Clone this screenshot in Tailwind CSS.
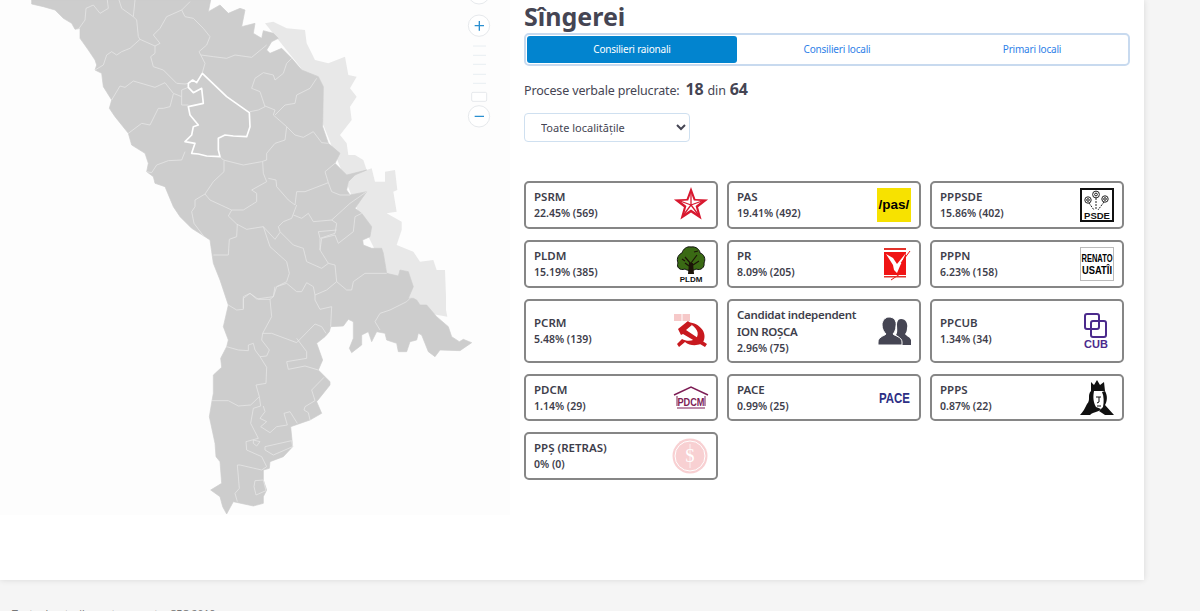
<!DOCTYPE html>
<html lang="en">
<head>
    <meta charset="UTF-8">
    <meta name="viewport" content="width=device-width, initial-scale=1.0">
    <title>Sîngerei</title>
    <script src="https://cdn.jsdelivr.net/npm/@tailwindcss/browser@4"></script>
</head>
<body class="bg-[#f5f5f5] h-[611px] overflow-hidden font-['Noto_Sans',sans-serif] text-[#454553]">
    <div class="w-[1144px] h-[580px] bg-white shadow-[0_0_6px_rgba(0,0,0,0.12)] flex">
        <!-- map -->
        <div class="w-[510px] h-[515px] bg-[#fdfdfd] shrink-0">
            <svg viewBox="0 0 1530 1545" width="510" height="515" class="block">
                <!-- transnistria -->
                <path fill="#e8e8e8" d="M795,70 L820,65 860,85 915,90 920,130 945,180 985,190 1035,170 1045,225 1070,230 1050,265 1070,290 1050,320 1055,360 1020,405 1040,430 1045,465 1065,465 1090,480 1100,510 1115,505 1125,545 1155,545 1155,515 1185,510 1192,570 1180,575 1190,635 1160,640 1205,665 1205,690 1190,735 1240,755 1260,785 1300,780 1310,810 1335,810 1338,890 1338,930 1342,950 1260,935 1200,900 1100,700 1000,450 900,200 Z"/>
                <!-- main outline -->
                <path fill="#cdcdcd" stroke="#cdcdcd" stroke-width="2" stroke-linejoin="round" d="M95,0 L95,12 130,20 165,30 190,55 215,70 225,88 240,85 240,115 265,150 285,180 290,195 285,210 305,220 310,260 335,300 328,325 345,350 385,400 395,435 435,460 445,490 440,515 460,530 465,550 495,560 520,620 540,650 575,685 615,710 630,720 640,790 660,840 680,900 685,915 670,980 685,1020 680,1040 662,1075 665,1102 640,1125 640,1180 636,1202 628,1250 645,1330 648,1370 660,1385 665,1450 632,1470 660,1490 668,1520 680,1542 700,1505 760,1518 790,1510 790,1490 800,1470 790,1440 790,1410 808,1405 810,1385 850,1370 878,1340 872,1280 930,1260 965,1240 950,1205 990,1155 990,1145 955,1110 968,1080 950,1030 975,1010 988,995 992,980 1030,978 1045,958 1060,965 1060,1015 1048,1045 1055,1058 1085,1035 1085,1005 1105,995 1115,1025 1130,995 1155,1000 1160,1020 1190,1030 1195,1055 1220,1055 1230,1025 1250,1020 1255,1000 1265,1005 1285,1055 1305,1070 1320,1050 1380,1052 1415,1028 1390,1018 1378,1025 1355,1010 1345,980 1310,950 1280,915 1260,915 1250,900 1240,895 1225,895 1240,860 1225,815 1200,810 1195,828 1160,820 1150,760 1145,745 1115,745 1090,735 1088,720 1110,710 1115,680 1085,640 1065,625 1100,575 1050,585 1040,570 1045,545 1065,525 1100,510 1040,525 1005,490 1020,460 985,430 968,380 970,260 955,230 905,210 875,175 845,145 810,160 800,150 815,125 835,115 820,100 790,92 785,115 760,100 765,70 725,80 735,30 720,25 685,40 660,15 625,35 632,0 Z"/>
                <!-- district borders -->
                <g fill="none" stroke="#e6e6e6" stroke-width="2.4" stroke-linejoin="round">
                    <path d="M322,0 L325,25 300,40 280,15 258,25 255,60 235,88"/>
                    <path d="M357,0 L365,25 400,50 410,60 415,110 420,118 390,145 365,155 350,165 335,155 320,165 310,195 285,210"/>
                    <path d="M405,0 L400,50"/>
                    <path d="M570,5 L545,30 500,50 480,85 460,105 480,130 465,138 420,118"/>
                    <path d="M545,30 L555,50 580,55 610,85 630,110 620,135 597,155 615,190 607,218"/>
                    <path d="M465,138 L465,160 452,170 460,200 490,210 530,250 555,252 565,250"/>
                    <path d="M603,165 L640,170 680,175 705,165 755,172 800,135"/>
                    <path d="M875,175 L860,190 850,220 825,240 820,225 790,218 765,235 755,265 780,275 795,320 775,330 750,335"/>
                    <path d="M795,318 L825,330 820,345 860,380 855,420 825,430 800,460 800,480 785,485 730,495 670,480 660,470"/>
                    <path d="M950,235 L930,265 890,285 885,310 855,315 825,345"/>
                    <path d="M860,380 L885,405 910,412 940,395 965,428 985,430"/>
                    <path d="M335,300 L360,258 375,262 400,243 465,262 495,248 520,280 545,290"/>
                    <path d="M520,282 L510,320 490,325 475,325 450,375 425,370 385,400"/>
                    <path d="M545,290 L545,270 565,262 M545,290 L545,315 565,315"/>
                    <path d="M555,455 L545,480 505,482 470,495 455,518 440,515"/>
                    <path d="M672,482 L672,515 640,545 615,582 585,600 585,620 575,635 582,670 612,710"/>
                    <path d="M615,582 L630,600 695,630 730,630 770,605 770,580 755,570 800,545 790,520 788,485"/>
                    <path d="M805,535 L828,540 830,560 865,600 885,615 890,575 915,575 985,548 975,515 1005,490"/>
                    <path d="M985,548 L995,575 1020,585 1050,585"/>
                    <path d="M890,615 L875,655 850,665 835,680 840,695 880,735 910,745 920,785 965,805 985,790 960,750 960,715 1005,700 1010,670 995,660 1050,610 1100,575"/>
                    <path d="M695,630 L685,648 710,672 740,688 790,680 825,718 840,697"/>
                    <path d="M712,672 L710,710 688,718 685,765 640,765"/>
                    <path d="M880,645 L905,655 925,640 940,665 995,660"/>
                    <path d="M1010,690 L955,695 960,715 M960,750 L965,715 1005,705 1015,730 1060,695 1065,650 1085,640"/>
                    <path d="M790,680 L810,740 860,785 868,820 860,845 830,860 820,890 770,897 750,880 730,890 730,925"/>
                    <path d="M985,790 L1005,795 1010,845 980,870 945,885 940,860 920,848 905,875 890,875 860,850 830,860"/>
                    <path d="M1010,845 L1040,870 1055,870 1060,845 1095,820 1160,820"/>
                    <g transform="translate(0,840)">
                        <path d="M685,75 L710,90 730,88 730,55 750,40 775,58 810,58 815,110 788,160 785,180 808,210 800,228 780,230 765,210 760,190 745,195 745,212 715,210 680,200"/>
                        <path d="M810,58 L820,50 825,20"/>
                        <path d="M945,45 L945,60 960,88 995,80 992,140"/>
                        <path d="M788,160 L815,160 890,188 945,132 965,140 978,160"/>
                        <path d="M890,175 L920,215 920,235 860,245 865,268 915,258 955,270"/>
                        <path d="M780,230 L800,262 798,310 768,315 778,350 752,375 715,378 685,362 636,362"/>
                        <path d="M778,350 L782,378 760,385 752,430 775,475 738,485 740,510 785,530 800,560 785,570 720,555 712,555 718,625 705,640 712,665"/>
                        <path d="M790,378 L795,395 780,415 800,425 782,440 810,458 830,440 862,435 852,400 870,395 892,430"/>
                        <path d="M930,420 L925,398 912,390 915,380 945,362 935,330 972,292"/>
                        <path d="M795,500 L875,482 878,500 820,525 795,510 Z"/>
                        <path d="M760,480 L780,485 770,498 760,490 Z"/>
                        <path d="M765,602 L790,600 798,632 768,645 762,620 Z"/>
                        <path d="M1125,125 L1140,100 1170,90 1220,65 1235,50 M1125,125 L1140,150"/>
                    </g>
                </g>
                <!-- selected district -->
                <path fill="none" stroke="#fff" stroke-width="5" stroke-linejoin="round" d="M607,220 L680,290 748,338 750,380 740,410 700,408 675,405 655,415 655,450 660,470 620,468 595,462 575,460 585,430 555,425 575,405 580,380 595,375 570,345 565,320 610,310 605,265 580,278 565,262 565,250 578,240 590,248 Z"/>
                <!-- zoom control -->
                <g fill="#fff" stroke="#e6e9ec" stroke-width="3">
                    <circle cx="1437" cy="-20" r="32"/>
                    <circle cx="1437" cy="77" r="32"/>
                    <circle cx="1437" cy="349" r="32"/>
                    <rect x="1415" y="277" width="45" height="27" rx="4"/>
                </g>
                <path fill="none" stroke="#e8eef2" stroke-width="3" d="M1419,138 H1458 M1419,166 H1458 M1419,193 H1458 M1419,223 H1458 M1419,250 H1458"/>
                <path fill="none" stroke="#2a8fd0" stroke-width="4" d="M1424,77 H1452 M1438,63 V92 M1424,349 H1452"/>
            </svg>
        </div>
        <!-- results -->
        <div class="pl-[14px] flex-1">
            <h1 class="text-[25px] font-bold leading-[33px] text-[#454553]">Sîngerei</h1>
            <div class="w-[606px] h-[33px] border-2 border-[#c8daef] rounded-[5px] flex p-px text-[10px] tracking-[-0.2px]">
                <div class="w-[210px] bg-[#0284cf] text-white rounded-[3px] flex items-center justify-center">Consilieri raionali</div>
                <div class="w-[200px] text-[#2f7fe8] flex items-center justify-center">Consilieri locali</div>
                <div class="flex-1 text-[#2f7fe8] flex items-center justify-center">Primari locali</div>
            </div>
            <p class="mt-[11px] text-[12.5px] tracking-[-0.15px] leading-[24px] h-[24px] flex items-baseline">
                <span>Procese verbale prelucrate:</span>
                <b class="ml-[6px] text-[16px]">18</b>
                <span class="ml-[4px]">din</span>
                <b class="ml-[4px] text-[16px]">64</b>
            </p>
            <select class="mt-[12px] block w-[166px] h-[29px] border border-[#cfe0f0] rounded-[4px] bg-white pl-[12px] text-[11px] text-[#454553]">
                <option>Toate localitățile</option>
            </select>
            <div class="mt-[39px] grid grid-cols-[194px_194px_194px] gap-x-[9px] gap-y-[11px] text-[#3e3e4b]">
                <div class="h-[48px] border-2 border-[#868686] rounded-[5px] pl-[8px] pr-[8px] flex items-center justify-between">
                    <div class="text-[11.5px] leading-[16px] font-semibold"><div>PSRM</div><div class="text-[10.5px]">22.45% (569)</div></div>
                    <svg viewBox="0 0 34 34" class="w-[34px] h-[34px] overflow-visible">
                        <polygon fill="#d8182f" points="17,-1 21.4,10.9 34.1,11.4 24.1,19.3 27.6,31.6 17,24.5 6.4,31.6 9.9,19.3 -0.1,11.4 12.6,10.9"/>
                        <polygon fill="#fff" points="17,5 19.8,12.6 28,13 21.6,18 23.8,26 17,21.4 10.2,26 12.4,18 6,13 14.2,12.6"/>
                        <path fill="none" stroke="#d8182f" stroke-width="1.3" d="M17,17 V5 M17,17 L28,13 M17,17 L23.8,26 M17,17 L10.2,26 M17,17 L6,13"/>
                    </svg>
                </div>
                <div class="h-[48px] border-2 border-[#868686] rounded-[5px] pl-[8px] pr-[8px] flex items-center justify-between">
                    <div class="text-[11.5px] leading-[16px] font-semibold"><div>PAS</div><div class="text-[10.5px]">19.41% (492)</div></div>
                    <div class="w-[34px] h-[34px] bg-[#f7e200] flex items-center justify-center text-black font-bold text-[13.5px] font-['Liberation_Sans',sans-serif]">/pas/</div>
                </div>
                <div class="h-[48px] border-2 border-[#868686] rounded-[5px] pl-[8px] pr-[8px] flex items-center justify-between">
                    <div class="text-[11.5px] leading-[16px] font-semibold"><div>PPPSDE</div><div class="text-[10.5px]">15.86% (402)</div></div>
                    <svg viewBox="0 0 34 34" class="w-[34px] h-[34px]">
                        <rect x="1" y="1" width="32" height="32" fill="#fff" stroke="#111" stroke-width="2"/>
                        <g fill="#fff" stroke="#222" stroke-width="1">
                            <circle cx="16" cy="6.5" r="3.4"/><circle cx="8" cy="12" r="3.2"/><circle cx="25" cy="11" r="3.2"/>
                            <circle cx="16" cy="6.5" r="1.4"/><circle cx="8" cy="12" r="1.3"/><circle cx="25" cy="11" r="1.3"/>
                        </g>
                        <path fill="none" stroke="#222" stroke-dasharray="2 1" d="M16,10 V22 M9,15 L14,22 M24,14 L18,22"/>
                        <text x="17" y="31" text-anchor="middle" font-family="Liberation Sans" font-weight="700" font-size="9.5" fill="#111">PSDE</text>
                    </svg>
                </div>
                <div class="h-[48px] border-2 border-[#868686] rounded-[5px] pl-[8px] pr-[8px] flex items-center justify-between">
                    <div class="text-[11.5px] leading-[16px] font-semibold"><div>PLDM</div><div class="text-[10.5px]">15.19% (385)</div></div>
                    <svg viewBox="0 0 34 36" class="w-[34px] h-[36px] overflow-visible">
                        <path fill="#3a6a14" stroke="#111" stroke-width="1" d="M17,1 C22,0 26,4 26,7 C30,8 32,13 30,17 C31,21 27,25 22,23 C19,25 14,25 11,23 C6,25 2,21 4,17 C2,12 5,8 8,7 C9,3 13,0 17,1 Z"/>
                        <path fill="#1c1408" d="M15,17 L19,17 20,28 14,28 Z"/>
                        <path fill="none" stroke="#1c1408" stroke-width="1.2" d="M17,18 L11,11 M17,17 L23,9 M11,17 L15,20 M25,15 L19,19 M8,13 L11,15 M20,6 L24,5"/>
                        <text x="17" y="35.5" text-anchor="middle" font-family="Liberation Sans" font-weight="700" font-size="8" fill="#111">PLDM</text>
                    </svg>
                </div>
                <div class="h-[48px] border-2 border-[#868686] rounded-[5px] pl-[8px] pr-[8px] flex items-center justify-between">
                    <div class="text-[11.5px] leading-[16px] font-semibold"><div>PR</div><div class="text-[10.5px]">8.09% (205)</div></div>
                    <svg viewBox="0 0 34 34" class="w-[34px] h-[34px]">
                        <rect x="7" y="1" width="22" height="2" fill="#e2322b"/>
                        <rect x="7" y="5" width="22" height="23" fill="#f01414"/>
                        <path fill="#fff" d="M9,7 L16,11 20,17 29,6 23,19 20,26 17,23 16,18 Z"/>
                        <path fill="none" stroke="#f01414" d="M24,16 L33,4 M14,33 L23,27"/>
                        <rect x="7" y="29" width="22" height="1.5" fill="#e2322b"/>
                    </svg>
                </div>
                <div class="h-[48px] border-2 border-[#868686] rounded-[5px] pl-[8px] pr-[8px] flex items-center justify-between">
                    <div class="text-[11.5px] leading-[16px] font-semibold"><div>PPPN</div><div class="text-[10.5px]">6.23% (158)</div></div>
                    <svg viewBox="0 0 34 34" class="w-[34px] h-[34px] overflow-visible">
                        <rect x="0.5" y="0.5" width="33" height="33" fill="#fff" stroke="#bbb"/>
                        <g font-family="Liberation Sans" font-weight="700" font-size="11" fill="#000">
                            <text x="1.5" y="14.5" textLength="31" lengthAdjust="spacingAndGlyphs">RENATO</text>
                            <text x="2" y="27" textLength="30" lengthAdjust="spacingAndGlyphs">USATÎI</text>
                        </g>
                    </svg>
                </div>
                <div class="h-[64px] border-2 border-[#868686] rounded-[5px] pl-[8px] pr-[8px] flex items-center justify-between">
                    <div class="text-[11.5px] leading-[16px] font-semibold"><div>PCRM</div><div class="text-[10.5px]">5.48% (139)</div></div>
                    <svg viewBox="0 0 34 36" class="w-[34px] h-[36px]">
                        <rect x="0" y="1" width="7.5" height="7" fill="#f6c9c9"/><rect x="8.5" y="1" width="7.5" height="7" fill="#f6c9c9"/>
                        <path fill="#c8191f" d="M12,9 C24,9 33,18 30,27 C28,33 17,34 11,29 L5,34 L3,31 L8,26 C13,29 21,28 23,24 C26,18 20,12 12,9 Z"/>
                        <path fill="#c8191f" d="M4,16 L14,8 18,12 12,17 33,31 31,34 9,21 7,22 Z"/>
                    </svg>
                </div>
                <div class="h-[64px] border-2 border-[#868686] rounded-[5px] pl-[8px] pr-[8px] flex items-center justify-between">
                    <div class="text-[11.5px] leading-[17px] font-semibold tracking-[-0.3px]"><div>Candidat independent</div><div>ION ROȘCA</div><div class="text-[10.5px] tracking-normal">2.96% (75)</div></div>
                    <svg viewBox="0 0 34 30" class="w-[34px] h-[30px]">
                        <path fill="#454553" d="M24,3 C29,3 31,8 30,12 C30,15 29,17 28,18 C29,20 33,21 34,24 L34,29 L24,29 C24,25 23,21 19,19 C21,17 20,12 20,9 C20,6 21,3 24,3 Z"/>
                        <path fill="#454553" stroke="#fff" stroke-width="1" d="M12,1 C17,1 20,5 19,10 C19,14 17,17 16,18 C18,20 25,21 25,26 L25,29 L1,29 L1,26 C1,21 7,20 9,18 C7,16 5,13 5,9 C5,5 8,1 12,1 Z"/>
                    </svg>
                </div>
                <div class="h-[64px] border-2 border-[#868686] rounded-[5px] pl-[8px] pr-[8px] flex items-center justify-between">
                    <div class="text-[11.5px] leading-[16px] font-semibold"><div>PPCUB</div><div class="text-[10.5px]">1.34% (34)</div></div>
                    <svg viewBox="0 0 34 36" class="w-[34px] h-[36px]">
                        <g fill="none" stroke="#4b2a8c" stroke-width="2">
                            <rect x="5" y="1" width="14" height="15" rx="2"/>
                            <rect x="11" y="8" width="15" height="16" rx="2"/>
                        </g>
                        <text x="16" y="35" text-anchor="middle" font-family="Liberation Sans" font-weight="700" font-size="11" fill="#4b2a8c">CUB</text>
                    </svg>
                </div>
                <div class="h-[47px] border-2 border-[#868686] rounded-[5px] pl-[8px] pr-[8px] flex items-center justify-between">
                    <div class="text-[11.5px] leading-[16px] font-semibold"><div>PDCM</div><div class="text-[10.5px]">1.14% (29)</div></div>
                    <svg viewBox="0 0 34 24" class="w-[34px] h-[24px] overflow-visible">
                        <path fill="none" stroke="#7d1d55" stroke-width="1.4" d="M0,9 L17,1 34,9"/>
                        <path fill="none" stroke="#7d1d55" stroke-width="1" d="M3,10 V20 M31,10 V20 M3,22 H31"/>
                        <text x="3.5" y="19.5" font-family="Liberation Sans" font-weight="700" font-size="11" textLength="27" lengthAdjust="spacingAndGlyphs" fill="#7d1d55">PDCM</text>
                    </svg>
                </div>
                <div class="h-[47px] border-2 border-[#868686] rounded-[5px] pl-[8px] pr-[8px] flex items-center justify-between">
                    <div class="text-[11.5px] leading-[16px] font-semibold"><div>PACE</div><div class="text-[10.5px]">0.99% (25)</div></div>
                    <svg viewBox="0 0 34 16" class="w-[34px] h-[16px] overflow-visible">
                        <text x="2" y="13" font-family="Liberation Sans" font-weight="700" font-size="14" textLength="31" lengthAdjust="spacingAndGlyphs" fill="#2d2f85">PACE</text>
                    </svg>
                </div>
                <div class="h-[47px] border-2 border-[#868686] rounded-[5px] pl-[8px] pr-[8px] flex items-center justify-between">
                    <div class="text-[11.5px] leading-[16px] font-semibold"><div>PPPS</div><div class="text-[10.5px]">0.87% (22)</div></div>
                    <svg viewBox="0 0 34 36" class="w-[34px] h-[36px]">
                        <path fill="#111" d="M11,2 L14,5 17,0 20,5 24,2 25,11 11,11 Z"/>
                        <path fill="#111" d="M11,11 C7,15 11,20 7,24 C5,28 3,32 0,35 L10,35 C14,31 18,33 21,29 L16,27 C13,22 13,16 14,11 Z"/>
                        <path fill="#111" d="M25,11 C28,16 27,22 25,25 L34,35 L25,35 L19,31 L23,27 C24,22 24,16 22,12 Z"/>
                        <path fill="none" stroke="#111" d="M16,17 H21 M19,17 V22 L17,23 M17,26 H21"/>
                    </svg>
                </div>
                <div class="h-[48px] border-2 border-[#868686] rounded-[5px] pl-[8px] pr-[8px] flex items-center justify-between">
                    <div class="text-[11.5px] leading-[16px] font-semibold"><div>PPȘ (RETRAS)</div><div class="text-[10.5px]">0% (0)</div></div>
                    <svg viewBox="0 0 36 36" class="w-[36px] h-[36px]">
                        <circle cx="18" cy="18" r="17.5" fill="#f8d0d2"/>
                        <circle cx="18" cy="18" r="15" fill="none" stroke="#fff" stroke-width="1"/>
                        <path stroke="#fff" stroke-width="0.7" d="M18,6 V30"/>
                        <text x="18" y="24" text-anchor="middle" font-family="Liberation Serif" font-size="18" fill="#fff">S</text>
                    </svg>
                </div>
            </div>
        </div>
    </div>
    <footer class="pl-[12px] pt-[27px] text-[10.5px] leading-[14px] text-[#777]">Toate drepturile sunt rezervate, CEC 2019</footer>
</body>
</html>
